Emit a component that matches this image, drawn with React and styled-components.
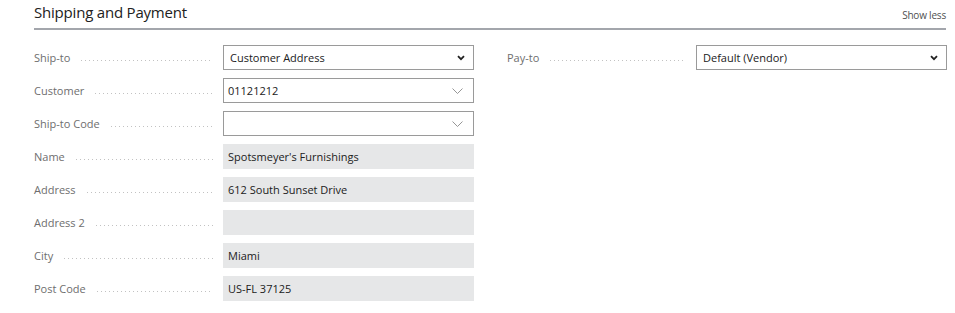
import React from "react";
import styled, { createGlobalStyle } from "styled-components";

const GlobalStyle = createGlobalStyle`
  body {
    margin: 0;
    background: #ffffff;
    font-family: "Open Sans", "Noto Sans", Arial, sans-serif;
  }
`;

const Page = styled.div`
  width: 955px;
  height: 313px;
  padding: 0 9px 0 34px;
  box-sizing: border-box;
`;

const Header = styled.div`
  display: flex;
  justify-content: space-between;
  align-items: flex-end;
  height: 30px;
  box-sizing: border-box;
  padding-bottom: 6px;
  border-bottom: 2px solid #a3a6ac;
`;

const Title = styled.div`
  font-size: 15px;
  color: #212121;
  letter-spacing: -0.2px;
  line-height: 20px;
`;

const ToggleLink = styled.div`
  font-size: 10px;
  color: #505050;
  line-height: 14px;
  letter-spacing: -0.2px;
`;

const Columns = styled.div`
  display: grid;
  grid-template-columns: 440px 439px;
  column-gap: 33px;
  padding-top: 11px;
`;

const Column = styled.div`
  display: flex;
  flex-direction: column;
`;

const Row = styled.div`
  display: grid;
  grid-template-columns: 179px 251px;
  column-gap: 10px;
  align-items: center;
  height: 33px;
`;

const Label = styled.div`
  display: flex;
  align-items: baseline;
  font-size: 11px;
  color: #6e6e6e;
  white-space: nowrap;
`;

const Leader = styled.span`
  flex: 1;
  height: 2px;
  margin-left: 11px;
  background-image: linear-gradient(to right, #c2c2c2 1px, transparent 1px);
  background-size: 4px 1px;
  background-repeat: repeat-x;
  background-position: left top;
`;

const Field = styled.div`
  display: flex;
  align-items: center;
  justify-content: space-between;
  height: 25px;
  box-sizing: border-box;
  padding: 0 8px 0 ${({ $kind }) => ($kind === "select" ? "6px" : "4px")};
  font-size: 11px;
  color: #212121;
  background: ${({ $kind }) => ($kind === "readonly" ? "#e6e7e8" : "#ffffff")};
  border: 1px solid
    ${({ $kind }) => ($kind === "readonly" ? "#e6e7e8" : "#9a9a9a")};
`;

const SelectChevron = () => (
  <svg width="8" height="6" viewBox="0 0 8 6">
    <path d="M1 1.2 L4 4.2 L7 1.2" fill="none" stroke="#222" strokeWidth="1.8" />
  </svg>
);

const LookupChevron = () => (
  <svg width="11" height="6" viewBox="0 0 11 6" style={{ marginRight: 2 }}>
    <path d="M0.5 0.5 L5.5 5.5 L10.5 0.5" fill="none" stroke="#8a8a8a" strokeWidth="0.9" />
  </svg>
);

const leftFields = [
  { label: "Ship-to", value: "Customer Address", kind: "select" },
  { label: "Customer", value: "01121212", kind: "lookup" },
  { label: "Ship-to Code", value: "", kind: "lookup" },
  { label: "Name", value: "Spotsmeyer's Furnishings", kind: "readonly" },
  { label: "Address", value: "612 South Sunset Drive", kind: "readonly" },
  { label: "Address 2", value: "", kind: "readonly" },
  { label: "City", value: "Miami", kind: "readonly" },
  { label: "Post Code", value: "US-FL 37125", kind: "readonly" },
];

const rightFields = [{ label: "Pay-to", value: "Default (Vendor)", kind: "select" }];

const FieldRow = ({ label, value, kind }) => (
  <Row>
    <Label>
      {label}
      <Leader />
    </Label>
    <Field $kind={kind}>
      <span>{value}</span>
      {kind === "select" && <SelectChevron />}
      {kind === "lookup" && <LookupChevron />}
    </Field>
  </Row>
);

const App = () => (
  <Page>
    <GlobalStyle />
    <Header>
      <Title>Shipping and Payment</Title>
      <ToggleLink>Show less</ToggleLink>
    </Header>
    <Columns>
      <Column>
        {leftFields.map((f) => (
          <FieldRow key={f.label} {...f} />
        ))}
      </Column>
      <Column>
        {rightFields.map((f) => (
          <FieldRow key={f.label} {...f} />
        ))}
      </Column>
    </Columns>
  </Page>
);

export default App;
